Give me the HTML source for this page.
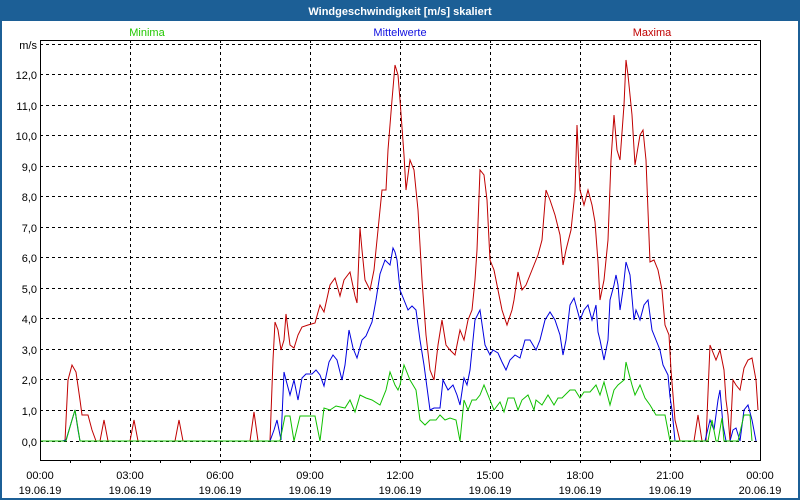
<!DOCTYPE html>
<html><head><meta charset="utf-8"><style>
html,body{margin:0;padding:0;background:#fff;}
svg{display:block;font-family:"Liberation Sans",sans-serif;}
</style></head><body>
<svg width="800" height="500" viewBox="0 0 800 500" xmlns="http://www.w3.org/2000/svg">
<rect x="0" y="0" width="800" height="500" fill="#1c5f96"/>
<rect x="2" y="21" width="796" height="477" fill="#fff"/>
<text x="400" y="15" font-size="11" font-weight="bold" fill="#fff" text-anchor="middle">Windgeschwindigkeit [m/s] skaliert</text>
<text x="147" y="36" font-size="11" fill="#22c800" text-anchor="middle">Minima</text>
<text x="400" y="36" font-size="11" fill="#1010e0" text-anchor="middle">Mittelwerte</text>
<text x="652" y="36" font-size="11" fill="#c00000" text-anchor="middle">Maxima</text>
<g stroke="#000" stroke-width="1" stroke-dasharray="3,3" shape-rendering="crispEdges">
<line x1="40" x2="760" y1="44.5" y2="44.5"/>
<line x1="40" x2="760" y1="74.5" y2="74.5"/>
<line x1="40" x2="760" y1="105.5" y2="105.5"/>
<line x1="40" x2="760" y1="135.5" y2="135.5"/>
<line x1="40" x2="760" y1="166.5" y2="166.5"/>
<line x1="40" x2="760" y1="196.5" y2="196.5"/>
<line x1="40" x2="760" y1="227.5" y2="227.5"/>
<line x1="40" x2="760" y1="257.5" y2="257.5"/>
<line x1="40" x2="760" y1="288.5" y2="288.5"/>
<line x1="40" x2="760" y1="318.5" y2="318.5"/>
<line x1="40" x2="760" y1="349.5" y2="349.5"/>
<line x1="40" x2="760" y1="379.5" y2="379.5"/>
<line x1="40" x2="760" y1="410.5" y2="410.5"/>
<line x1="40" x2="760" y1="441.5" y2="441.5"/>
<line y1="40" y2="460" x1="130.5" x2="130.5"/>
<line y1="40" y2="460" x1="220.5" x2="220.5"/>
<line y1="40" y2="460" x1="310.5" x2="310.5"/>
<line y1="40" y2="460" x1="400.5" x2="400.5"/>
<line y1="40" y2="460" x1="490.5" x2="490.5"/>
<line y1="40" y2="460" x1="580.5" x2="580.5"/>
<line y1="40" y2="460" x1="670.5" x2="670.5"/>
</g>
<g font-size="11" fill="#000" text-anchor="end">
<text x="37" y="49">m/s</text>
<text x="37" y="79">12,0</text><text x="37" y="110">11,0</text><text x="37" y="140">10,0</text>
<text x="37" y="171">9,0</text><text x="37" y="201">8,0</text><text x="37" y="232">7,0</text>
<text x="37" y="262">6,0</text><text x="37" y="293">5,0</text><text x="37" y="323">4,0</text>
<text x="37" y="354">3,0</text><text x="37" y="384">2,0</text><text x="37" y="415">1,0</text>
<text x="37" y="446">0,0</text>
</g>
<g stroke="#000" shape-rendering="crispEdges">
<path d="M70.5 460v3M100.5 460v3M130.5 460v3M160.5 460v3M190.5 460v3M220.5 460v3M250.5 460v3M280.5 460v3M310.5 460v3M340.5 460v3M370.5 460v3M400.5 460v3M430.5 460v3M460.5 460v3M490.5 460v3M520.5 460v3M550.5 460v3M580.5 460v3M610.5 460v3M640.5 460v3M670.5 460v3M700.5 460v3M730.5 460v3"/>
</g>
<g font-size="11" fill="#000" text-anchor="middle">
<text x="40" y="479">00:00</text><text x="40" y="494">19.06.19</text>
<text x="130" y="479">03:00</text><text x="130" y="494">19.06.19</text>
<text x="220" y="479">06:00</text><text x="220" y="494">19.06.19</text>
<text x="310" y="479">09:00</text><text x="310" y="494">19.06.19</text>
<text x="400" y="479">12:00</text><text x="400" y="494">19.06.19</text>
<text x="490" y="479">15:00</text><text x="490" y="494">19.06.19</text>
<text x="580" y="479">18:00</text><text x="580" y="494">19.06.19</text>
<text x="670" y="479">21:00</text><text x="670" y="494">19.06.19</text>
<text x="760" y="479">00:00</text><text x="760" y="494">20.06.19</text>
</g>
<g fill="none" stroke-width="1" stroke-linejoin="miter">
<polyline stroke="#c00000" points="40,441 65,441 68,380 72,365 76,372 80,400 82,415 88,415 92,430 96,441 100,441 104,420 108,441 130,441 134,420 138,441 175,441 179,420 183,441 250,441 254,412 258,441 270,441 273,360 275,322 278,330 281,350 284,340 286,314 290,345 294,348 298,335 302,327 308,325 315,323 320,305 324,312 330,285 335,278 340,296 344,280 350,272 355,296 357,303 360,228 362,250 365,280 370,290 374,270 378,230 382,190 386,190 388,150 392,100 395,65 398,75 400,100 404,155 406,190 410,160 414,170 418,210 422,280 426,335 430,370 434,380 438,345 442,320 446,345 450,350 455,355 460,330 464,340 468,320 472,310 475,280 477,250 480,170 484,175 487,200 490,260 494,270 498,290 502,310 507,325 512,310 514,300 518,272 522,290 526,285 532,270 538,255 542,240 546,190 550,200 555,215 560,235 563,265 566,250 571,230 575,192 577,125 580,190 584,205 588,190 592,205 595,222 598,262 600,300 604,280 608,240 611,160 614,115 617,150 620,160 624,105 626,60 628,75 632,115 635,165 640,135 643,130 646,160 650,262 654,260 658,270 662,290 665,325 669,335 671,370 675,420 680,441 694,441 698,415 702,441 706,441 710,345 712,350 716,360 720,350 724,370 726,400 728,415 730,441 733,380 736,385 740,390 744,368 748,360 752,358 756,380 758,410"/>
<polyline stroke="#0000e0" points="40,441 62,441 66,440 72,420 75,410 78,430 80,441 270,441 274,430 277,420 281,440 284,372 286,380 290,395 294,380 298,400 302,378 306,374 312,374 316,370 320,375 324,386 329,362 333,355 337,360 342,380 345,365 349,330 353,348 357,358 362,340 366,336 372,322 376,300 380,274 385,260 390,265 393,248 395,252 397,260 400,290 404,300 408,310 412,306 416,310 420,340 424,365 430,410 434,408 440,408 443,380 448,390 453,385 457,395 460,405 464,378 467,385 470,370 475,320 480,310 485,345 490,355 493,350 498,353 502,362 506,370 510,360 515,355 520,358 525,340 530,340 536,350 540,340 545,320 550,312 555,320 560,335 563,355 566,340 570,305 574,298 580,320 584,310 588,305 592,320 596,305 598,332 600,340 604,360 608,340 610,300 614,285 616,275 618,285 620,310 623,290 626,262 630,275 634,320 636,310 640,320 644,305 648,300 652,330 656,340 660,350 663,365 668,375 670,397 672,410 675,441 705,441 710,420 714,430 718,400 720,390 723,425 726,441 730,441 733,430 736,428 740,441 744,410 748,405 752,420 756,441"/>
<polyline stroke="#10c000" points="40,441 66,441 72,420 75,410 80,441 280,441 285,416 290,416 294,441 300,416 315,416 320,441 324,408 330,410 336,406 345,408 350,400 355,412 360,395 366,398 372,400 380,405 386,390 390,372 395,385 398,390 400,385 404,365 410,380 413,385 416,390 420,420 425,425 430,420 436,420 440,415 445,420 450,418 456,420 460,441 464,400 468,410 472,400 476,400 480,395 484,385 490,400 494,410 500,402 504,412 508,398 514,398 518,410 522,400 528,395 534,410 536,400 542,405 548,395 554,405 558,398 562,398 570,390 575,390 580,398 584,392 590,392 596,385 600,395 604,382 610,405 614,390 618,385 624,380 626,362 628,370 632,385 635,395 640,385 645,398 650,405 656,415 665,415 670,441 708,441 712,420 716,441 718,441 722,418 724,441 738,441 744,415 750,415 752,441"/>
</g>
<rect x="40.5" y="40.5" width="720" height="420" fill="none" stroke="#000" stroke-width="1" shape-rendering="crispEdges"/>
</svg>
</body></html>
